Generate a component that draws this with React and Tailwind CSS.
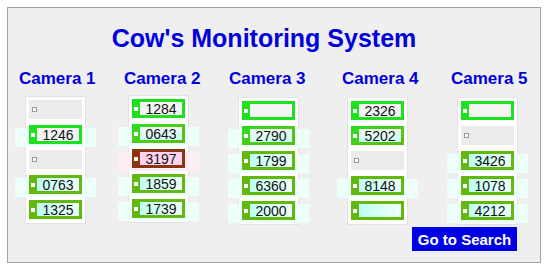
import React from 'react';

const cameras = [
    {
        name: 'Camera 1',
        colClass: 'ml-[11px]',
        cardClass: 'ml-[6px] mt-[9px]',
        rows: [
            { type: 'empty' },
            { type: 'tag', tone: 'lime', text: '1246', band: 'cyan' },
            { type: 'empty' },
            { type: 'tag', tone: 'olive', text: '0763', band: 'cyan' },
            { type: 'tag', tone: 'olive', text: '1325' },
        ],
    },
    {
        name: 'Camera 2',
        colClass: 'ml-[27px]',
        cardClass: 'ml-[4px] mt-[8px]',
        rows: [
            { type: 'tag', tone: 'lime', text: '1284' },
            { type: 'tag', tone: 'mix', text: '0643', band: 'cyan' },
            { type: 'tag', tone: 'brown', text: '3197', band: 'pink' },
            { type: 'tag', tone: 'olive', text: '1859', band: 'cyan' },
            { type: 'tag', tone: 'olive', text: '1739', band: 'cyan' },
        ],
    },
    {
        name: 'Camera 3',
        colClass: 'ml-[27px]',
        cardClass: 'ml-[9px] mt-[10px]',
        rows: [
            { type: 'tag', tone: 'lime', text: '' },
            { type: 'tag', tone: 'mix', text: '2790', band: 'cyan' },
            { type: 'tag', tone: 'olive', text: '1799', band: 'cyan' },
            { type: 'tag', tone: 'olive', text: '6360', band: 'cyan' },
            { type: 'tag', tone: 'olive', text: '2000', band: 'cyan' },
        ],
    },
    {
        name: 'Camera 4',
        colClass: 'ml-[35px]',
        cardClass: 'ml-[5px] mt-[10px]',
        rows: [
            { type: 'tag', tone: 'lime', text: '2326' },
            { type: 'tag', tone: 'mix', text: '5202' },
            { type: 'empty' },
            { type: 'tag', tone: 'olive', text: '8148', band: 'cyan' },
            { type: 'tag', tone: 'olive', text: '' },
        ],
    },
    {
        name: 'Camera 5',
        colClass: 'ml-[31px]',
        cardClass: 'ml-[6px] mt-[10px]',
        rows: [
            { type: 'tag', tone: 'lime', text: '' },
            { type: 'empty' },
            { type: 'tag', tone: 'olive', text: '3426', band: 'cyan' },
            { type: 'tag', tone: 'olive', text: '1078', band: 'cyan' },
            { type: 'tag', tone: 'olive', text: '4212', band: 'cyan' },
        ],
    },
];

const tones = {
    lime: { outer: 'bg-[#1fe01f]', inner: 'bg-[#f4f4f4]' },
    mix: {
        outer: 'bg-gradient-to-br from-[#1fe01f] to-[#5cba12]',
        inner: 'bg-gradient-to-b from-[#f4f4f4] to-[#c8fff4]',
    },
    olive: {
        outer: 'bg-[#62b80f]',
        inner: 'bg-gradient-to-r from-[#bffff2] to-[#effffb]',
    },
    brown: { outer: 'bg-[#8a3512]', inner: 'bg-[#ffd3ee]' },
};

// pale glow bands that stick out either side of a tag
const bands = {
    cyan: 'shadow-[14px_3px_0_0_#ecfffb,-14px_3px_0_0_#ecfffb]',
    pink: 'shadow-[14px_3px_0_0_#ffedf6,-14px_3px_0_0_#ffedf6]',
};

const EmptySlot = () => (
    <div className="flex items-center h-[19px] w-[53px] bg-[#ebebeb] pl-[3px]">
        <div className="w-[5px] h-[5px] border border-[#9a9a9a] bg-white" />
    </div>
);

const Tag = ({ tone, text, band }) => {
    const t = tones[tone];
    return (
        <div className={`flex items-center h-[19px] w-[53px] pl-[2px] pr-[3px] py-[3px] ${t.outer} ${band ? bands[band] : ''}`}>
            <div className="w-[4px] h-[4px] bg-white shrink-0" />
            <div className={`ml-[2px] flex-1 h-full flex items-center justify-center text-[14px] leading-none text-[#111] ${t.inner}`}>
                {text}
            </div>
        </div>
    );
};

const CameraColumn = ({ camera }) => (
    <div className={`w-[78px] flex flex-col ${camera.colClass}`}>
        <h2 className="text-[17px] leading-none font-bold text-[#0000dd] whitespace-nowrap">{camera.name}</h2>
        <div className={`w-[61px] bg-white border border-[#e2e2e2] px-[3px] pt-[3px] pb-[4px] flex flex-col gap-[6px] ${camera.cardClass}`}>
            {camera.rows.map((row, i) =>
                row.type === 'empty' ? (
                    <EmptySlot key={i} />
                ) : (
                    <Tag key={i} tone={row.tone} text={row.text} band={row.band} />
                )
            )}
        </div>
    </div>
);

const App = () => {
    return (
        <div className="w-[550px] h-[270px] bg-white pt-[7px] pl-[7px]" style={{ fontFamily: '"Liberation Sans", Arial, sans-serif' }}>
            <div className="w-[534px] h-[256px] border border-[#a3a3a3] bg-[#efefef] flex flex-col">
                <h1 className="mt-[18px] pr-[20px] text-center text-[25px] leading-none font-bold text-[#0000dd]">
                    Cow's Monitoring System
                </h1>

                {/* Camera columns */}
                <div className="flex items-start mt-[19px]">
                    {cameras.map((camera) => (
                        <CameraColumn key={camera.name} camera={camera} />
                    ))}
                </div>

                <div className="flex justify-end pr-[23px] mt-[2px]">
                    <button className="w-[105px] h-[24px] bg-[#0000e6] text-white text-[15px] font-bold leading-none">
                        Go to Search
                    </button>
                </div>
            </div>
        </div>
    );
};

export default App;
